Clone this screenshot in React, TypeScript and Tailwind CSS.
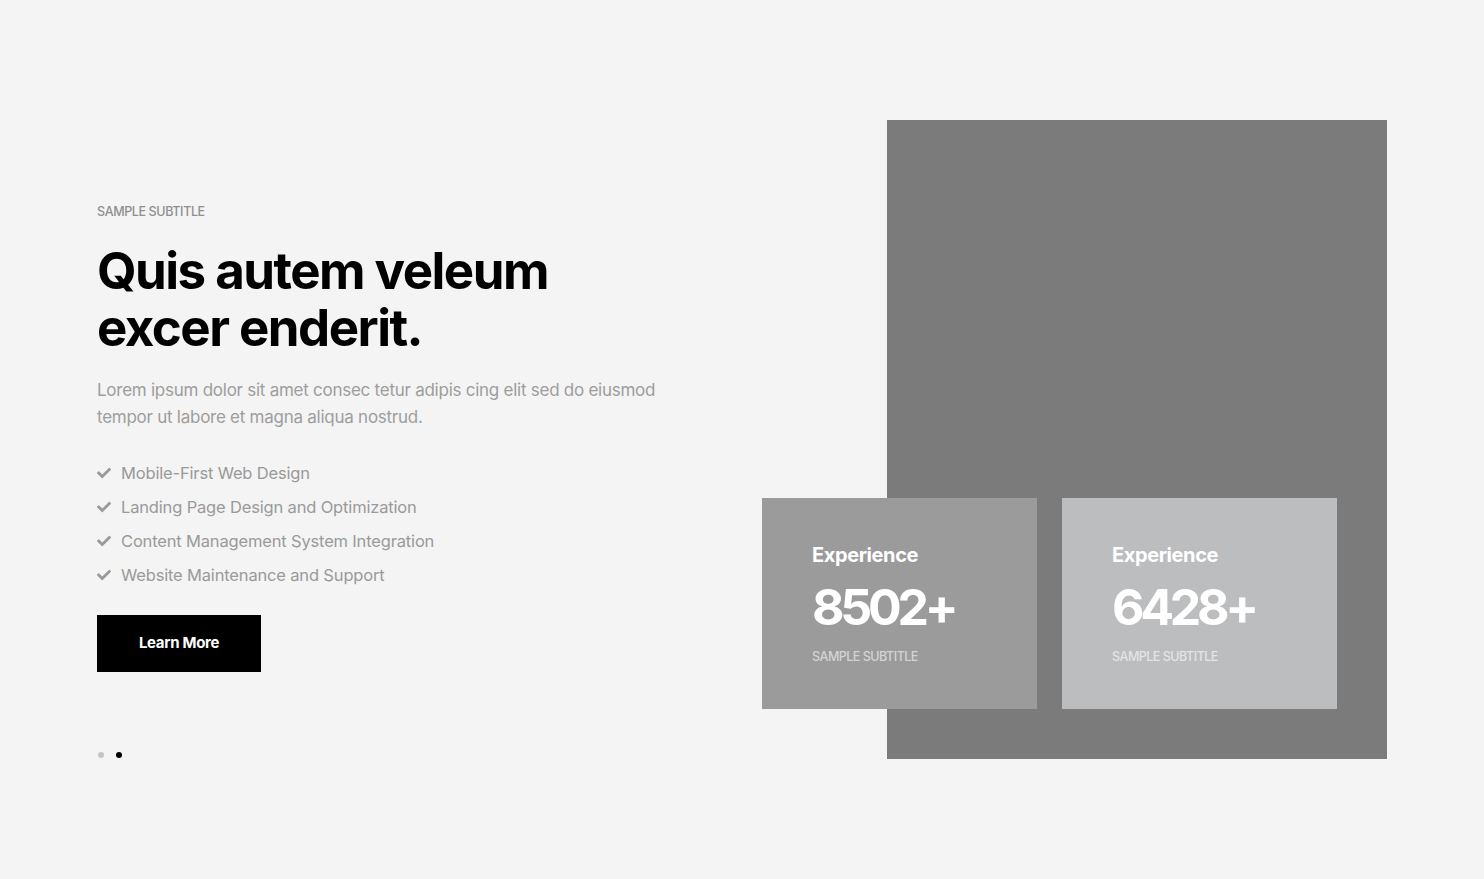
import { FaCheck } from 'react-icons/fa'

const features = [
  'Mobile-First Web Design',
  'Landing Page Design and Optimization',
  'Content Management System Integration',
  'Website Maintenance and Support',
]

const stats = [
  { label: 'Experience', value: '8502+', sub: 'SAMPLE SUBTITLE', bg: 'bg-[#9b9b9c]', subColor: 'text-[#d4d4d5]' },
  { label: 'Experience', value: '6428+', sub: 'SAMPLE SUBTITLE', bg: 'bg-[#bcbdbe]', subColor: 'text-[#e4e4e5]' },
]

export default function App() {
  return (
    <main className="min-h-screen w-full bg-[#f4f4f4] font-['Inter',sans-serif]">
      <div className="flex px-[97px] pt-[120px] pb-[120px]">
        {/* left column */}
        <div className="flex flex-col pt-[84px]">
          <p className="text-[12.5px] leading-[16px] font-medium text-[#8f8f8f] tracking-[-0.03em] uppercase">
            Sample Subtitle
          </p>
          <h1 className="mt-[22px] text-[51px] leading-[57px] font-bold text-black tracking-[-0.03em]">
            Quis autem veleum
            <br />
            excer enderit.
          </h1>
          <p className="mt-[21px] w-[580px] text-[17px] leading-[27px] text-[#9d9d9d] tracking-[-0.015em]">
            Lorem ipsum dolor sit amet consec tetur adipis cing elit sed do eiusmod tempor ut labore et magna aliqua nostrud.
          </p>
          <ul className="mt-[31px] flex flex-col gap-[12px]">
            {features.map((f, i) => (
              <li key={i} className="flex items-center gap-[10px] text-[16.5px] leading-[22px] text-[#9a9a9a] tracking-[-0.01em]">
                <FaCheck size={14} className="text-[#9a9a9a] shrink-0" />
                <span>{f}</span>
              </li>
            ))}
          </ul>
          <button className="mt-[29px] w-[164px] h-[57px] bg-black text-white text-[15px] font-bold tracking-[-0.02em]">
            Learn More
          </button>
          <div className="mt-[80px] flex items-center gap-[12px] pl-[1px]">
            <span className="w-[6px] h-[6px] rounded-full bg-[#c4c4c4]" />
            <span className="w-[6px] h-[6px] rounded-full bg-black" />
          </div>
        </div>

        {/* right column */}
        <div className="relative ml-auto w-[500px] h-[639px] bg-[#7b7b7c]">
          <div className="absolute left-[-125px] top-[378px] flex gap-[25px]">
            {stats.map((s, i) => (
              <div key={i} className={`w-[275px] h-[211px] ${s.bg} pl-[50px] pt-[44px] text-white`}>
                <p className="text-[20px] leading-[26px] font-bold tracking-[-0.02em]">{s.label}</p>
                <p className="mt-[12px] text-[50px] leading-[54px] font-bold tracking-[-0.085em]">{s.value}</p>
                <p className={`mt-[15px] text-[12.5px] leading-[16px] font-medium ${s.subColor} tracking-[-0.04em] uppercase`}>{s.sub}</p>
              </div>
            ))}
          </div>
        </div>
      </div>
    </main>
  )
}
